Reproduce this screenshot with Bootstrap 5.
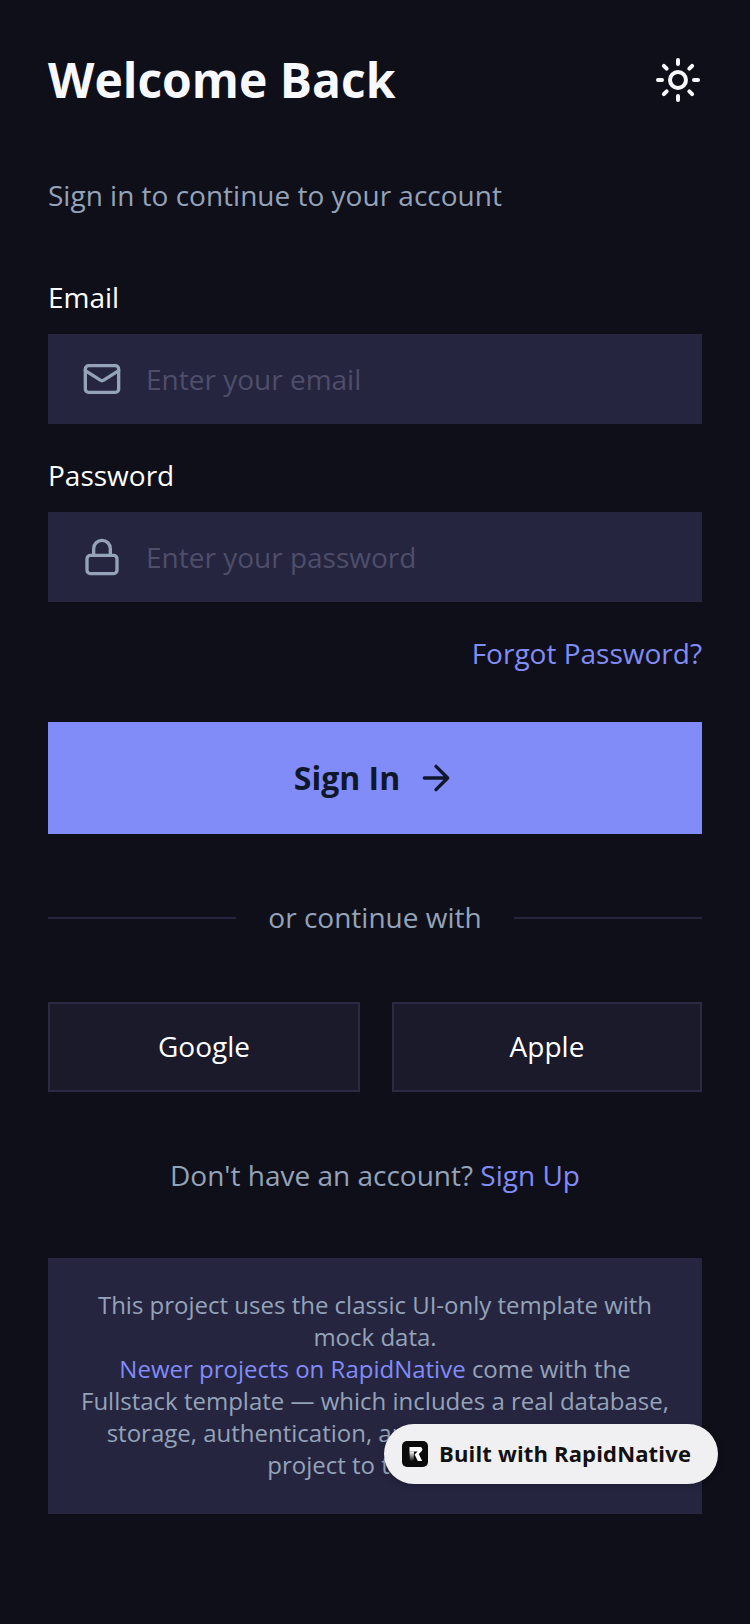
<!DOCTYPE html>
<html lang="en">
<head>
    <meta charset="UTF-8">
    <meta name="viewport" content="width=device-width, initial-scale=1.0">
    <link href="https://cdn.jsdelivr.net/npm/bootstrap@5.3.3/dist/css/bootstrap.min.css" rel="stylesheet">
    <script src="https://cdn.jsdelivr.net/npm/bootstrap@5.3.3/dist/js/bootstrap.bundle.min.js"></script>
    <title>Welcome Back</title>
    <style>
        html, body { height: 100%; }
        body { background: #0f0f1a; font-family: "Open Sans", "Noto Sans", sans-serif; color: #fff; }
        .screen { position: relative; min-height: 1624px; padding: 48px 48px 0; }
        .page-title { font-size: 48px; font-weight: 700; line-height: 64px; margin: 0; color: #f8f9ff; }
        .theme-btn { width: 48px; height: 64px; padding: 0; border: 0; background: none; }
        .subtitle { font-size: 28px; line-height: 38px; color: #94a3b8; margin: 64px 0 64px; }
        .field-label { font-size: 28px; line-height: 38px; color: #fff; margin-bottom: 18px; display: block; }
        .field-box { height: 90px; background: #252540; padding: 0 34px; gap: 24px; margin-bottom: 32px; }
        .field-box:last-of-type { margin-bottom: 0; }
        .field-box svg { flex: none; }
        .field-input.form-control { background: transparent; border: 0; border-radius: 0; padding: 0; box-shadow: none; color: #fff; font-size: 28px; line-height: 40px; }
        .field-input.form-control::placeholder { color: #4e4e69; opacity: 1; }
        .forgot { color: #818cf8; font-size: 28px; line-height: 38px; text-decoration: none; }
        .forgot-row { margin: 32px 0 50px; }
        .signin-btn { height: 112px; background: #818cf8; border: 0; border-radius: 0; color: #0f172a; font-size: 32px; font-weight: 700; gap: 16px; }
        .or-row { margin: 64px 0 64px; gap: 32px; height: 40px; }
        .or-line { height: 2px; background: #252540; flex: 1; }
        .or-text { font-size: 28px; line-height: 38px; color: #94a3b8; margin-bottom: 2px; }
        .social-row { gap: 32px; }
        .social-btn { height: 90px; flex: 1 1 0; background: #1a1a2a; border: 2px solid #2a2a42; border-radius: 0; color: #fff; font-size: 28px; padding: 0 0 2px; }
        .social-btn:first-child { flex: 0 0 312px; }
        .signup-line { font-size: 28px; line-height: 38px; color: #94a3b8; text-align: center; margin: 64px 0 64px; }
        .signup-line a, .note-box a { color: #818cf8; text-decoration: none; }
        .note-box { background: #252540; padding: 31px 32px 32px; color: #94a3b8; font-size: 24px; line-height: 32px; text-align: center; height: 256px; }
        .built-badge { position: absolute; left: 384px; top: 1424px; width: 334px; height: 60px; background: #f0f0f3; border-radius: 30px; padding: 0 26px 2px 18px; gap: 11px; color: #111; font-size: 22px; font-weight: 700; letter-spacing: .16px; box-shadow: 0 2px 6px rgba(0,0,0,.25); white-space: nowrap; }
        .built-badge svg { flex: none; margin-top: 2px; }
    </style>
</head>
<body>
    <div class="screen">
        <div class="d-flex justify-content-between align-items-center">
            <h1 class="page-title">Welcome Back</h1>
            <button class="theme-btn d-flex align-items-center justify-content-center" type="button" aria-label="Toggle theme">
                <svg width="48" height="48" viewBox="0 0 24 24" fill="none" stroke="#f8f9ff" stroke-width="2" stroke-linecap="round" stroke-linejoin="round">
                    <circle cx="12" cy="12" r="4"/>
                    <path d="M12 2v2M12 20v2M4.93 4.93l1.41 1.41M17.66 17.66l1.41 1.41M2 12h2M20 12h2M6.34 17.66l-1.41 1.41M19.07 4.93l-1.41 1.41"/>
                </svg>
            </button>
        </div>
        <p class="subtitle">Sign in to continue to your account</p>

        <form onsubmit="return false">
            <label class="field-label" for="email">Email</label>
            <div class="field-box d-flex align-items-center">
                <svg width="40" height="40" viewBox="0 0 24 24" fill="none" stroke="#94a3b8" stroke-width="2" stroke-linecap="round" stroke-linejoin="round">
                    <rect x="2" y="4" width="20" height="16" rx="2"/>
                    <path d="m22 7-8.97 5.7a1.94 1.94 0 0 1-2.06 0L2 7"/>
                </svg>
                <input id="email" class="form-control field-input" type="email" placeholder="Enter your email">
            </div>
            <label class="field-label" for="password">Password</label>
            <div class="field-box d-flex align-items-center">
                <svg width="40" height="40" viewBox="0 0 24 24" fill="none" stroke="#94a3b8" stroke-width="2" stroke-linecap="round" stroke-linejoin="round">
                    <rect x="3" y="11" width="18" height="11" rx="2"/>
                    <path d="M7 11V7a5 5 0 0 1 10 0v4"/>
                </svg>
                <input id="password" class="form-control field-input" type="password" placeholder="Enter your password">
            </div>
            <div class="forgot-row text-end"><a class="forgot" href="#">Forgot Password?</a></div>
            <button class="btn signin-btn w-100 d-flex align-items-center justify-content-center" type="submit">
                Sign In
                <svg width="40" height="40" viewBox="0 0 24 24" fill="none" stroke="#0f172a" stroke-width="2" stroke-linecap="round" stroke-linejoin="round">
                    <path d="M5 12h14M12 5l7 7-7 7"/>
                </svg>
            </button>
        </form>

        <div class="or-row d-flex align-items-center">
            <div class="or-line"></div>
            <span class="or-text">or continue with</span>
            <div class="or-line"></div>
        </div>

        <div class="social-row d-flex">
            <button class="btn social-btn" type="button">Google</button>
            <button class="btn social-btn" type="button">Apple</button>
        </div>

        <p class="signup-line">Don't have an account? <a href="#">Sign Up</a></p>

        <div class="note-box">
            This project uses the classic UI-only template with mock data.<br>
            <a href="#">Newer projects on RapidNative</a> come with the Fullstack template — which includes a real database, storage, authentication, and more. Upgrade this project to try it out.
        </div>

        <div class="built-badge d-flex align-items-center">
            <svg width="26" height="26" viewBox="0 0 26 26">
                <defs>
                    <linearGradient id="rStem" x1="0" y1="0" x2="0" y2="1">
                        <stop offset="0" stop-color="#fff"/>
                        <stop offset="1" stop-color="#111"/>
                    </linearGradient>
                </defs>
                <rect width="26" height="26" rx="5" fill="#0b0b0b"/>
                <path d="M7.5 6H18a2.4 2.4 0 0 1 1.8 4L16.8 13l3.4 7h-4.4L12.6 13.6 15.6 10.6H7.5z" fill="#fff"/>
                <path d="M7.5 10.6h4.6L11.6 20H8z" fill="url(#rStem)"/>
            </svg>
            <span>Built with RapidNative</span>
        </div>
    </div>
</body>
</html>
